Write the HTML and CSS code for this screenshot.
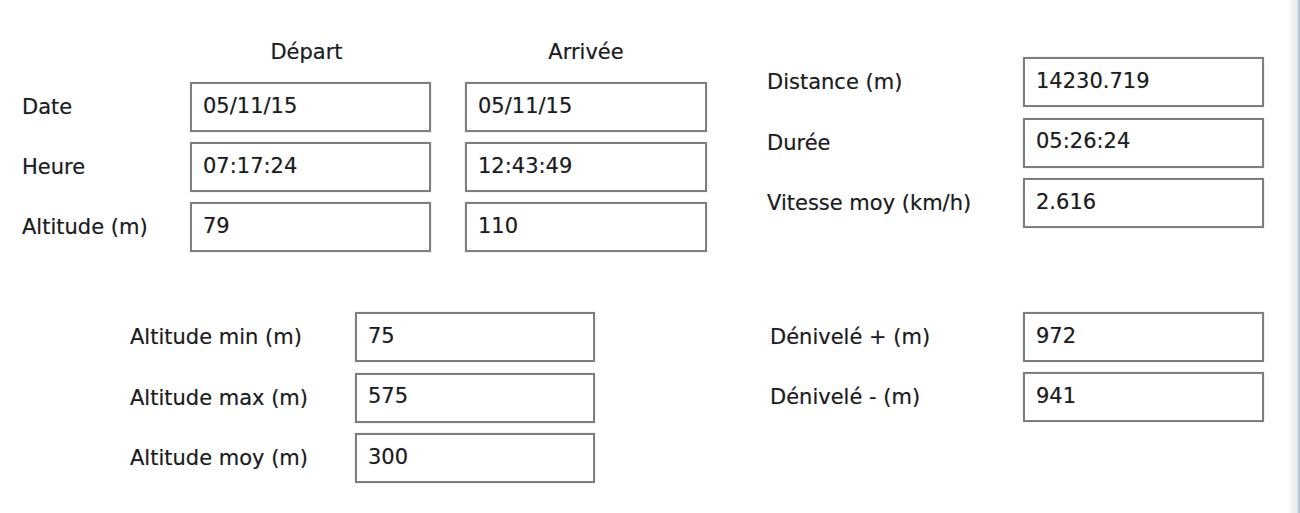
FILE: index.html
```html
<!DOCTYPE html>
<html lang="fr">
<head>
<meta charset="utf-8">
<title>Statistiques</title>
<link rel="stylesheet" href="styles.css">
</head>
<body>
<main class="form">
  <section class="top">
    <div class="dates">
      <span class="head head-1">Départ</span>
      <span class="head head-2">Arrivée</span>

      <span class="label">Date</span>
      <div class="field">05/11/15</div>
      <div class="field">05/11/15</div>

      <span class="label">Heure</span>
      <div class="field">07:17:24</div>
      <div class="field">12:43:49</div>

      <span class="label">Altitude (m)</span>
      <div class="field">79</div>
      <div class="field">110</div>
    </div>

    <div class="totals">
      <span class="label">Distance (m)</span>
      <div class="field">14230.719</div>
      <span class="label">Durée</span>
      <div class="field">05:26:24</div>
      <span class="label">Vitesse moy (km/h)</span>
      <div class="field">2.616</div>
    </div>
  </section>

  <section class="bottom">
    <div class="alts">
      <span class="label">Altitude min (m)</span>
      <div class="field">75</div>
      <span class="label">Altitude max (m)</span>
      <div class="field">575</div>
      <span class="label">Altitude moy (m)</span>
      <div class="field">300</div>
    </div>

    <div class="denivs">
      <span class="label">Dénivelé + (m)</span>
      <div class="field">972</div>
      <span class="label">Dénivelé - (m)</span>
      <div class="field">941</div>
    </div>
  </section>
</main>
<aside class="edge"></aside>
</body>
</html>
```

FILE: styles.css
```css
html, body {
  margin: 0;
  padding: 0;
  background: #ffffff;
}

body {
  display: flex;
  width: 1300px;
  height: 513px;
  overflow: hidden;
  font-family: "DejaVu Sans", "Liberation Sans", sans-serif;
  font-size: 21px;
  color: #1c1c22;
  text-shadow: 0 0 1px rgba(20, 20, 30, 0.35);
}

.form {
  flex: 1;
  display: flex;
  flex-direction: column;
}

.top {
  display: flex;
  align-items: flex-start;
}

.bottom {
  display: flex;
  align-items: flex-start;
  margin-top: 60px;
}

.dates {
  display: grid;
  grid-template-columns: 134px 241px 242px;
  grid-template-rows: 35px 50px 50px 50px;
  column-gap: 34px;
  row-gap: 10px;
  align-items: center;
  margin-left: 22px;
  margin-top: 37px;
}

.head {
  align-self: start;
  line-height: 30px;
  text-align: center;
}

.head-1 { grid-column: 2; margin-right: 8px; }
.head-2 { grid-column: 3; }

.totals {
  display: grid;
  grid-template-columns: 222px 241px;
  grid-auto-rows: 50px;
  column-gap: 34px;
  row-gap: 10.5px;
  align-items: center;
  margin-left: 60px;
  margin-top: 57px;
}

.alts {
  display: grid;
  grid-template-columns: 191px 240px;
  grid-auto-rows: 50px;
  column-gap: 34px;
  row-gap: 10.5px;
  align-items: center;
  margin-left: 130px;
}

.denivs {
  display: grid;
  grid-template-columns: 219px 241px;
  grid-auto-rows: 50px;
  column-gap: 34px;
  row-gap: 10px;
  align-items: center;
  margin-left: 175px;
}

.label {
  white-space: nowrap;
  line-height: 24px;
}

.field {
  box-sizing: border-box;
  height: 50px;
  border: 2px solid #7e7e7e;
  box-shadow: 0 0 1px #b8b8b8;
  background: #ffffff;
  padding: 0 0 3px 11px;
  display: flex;
  align-items: center;
  white-space: nowrap;
}

.edge {
  flex: 0 0 10px;
  height: 100%;
  background: linear-gradient(to right, #f6f6f6 0, #ececec 6px, #e4e4e4 8px, #b9cce4 8px, #a9c0de 10px);
}
```
